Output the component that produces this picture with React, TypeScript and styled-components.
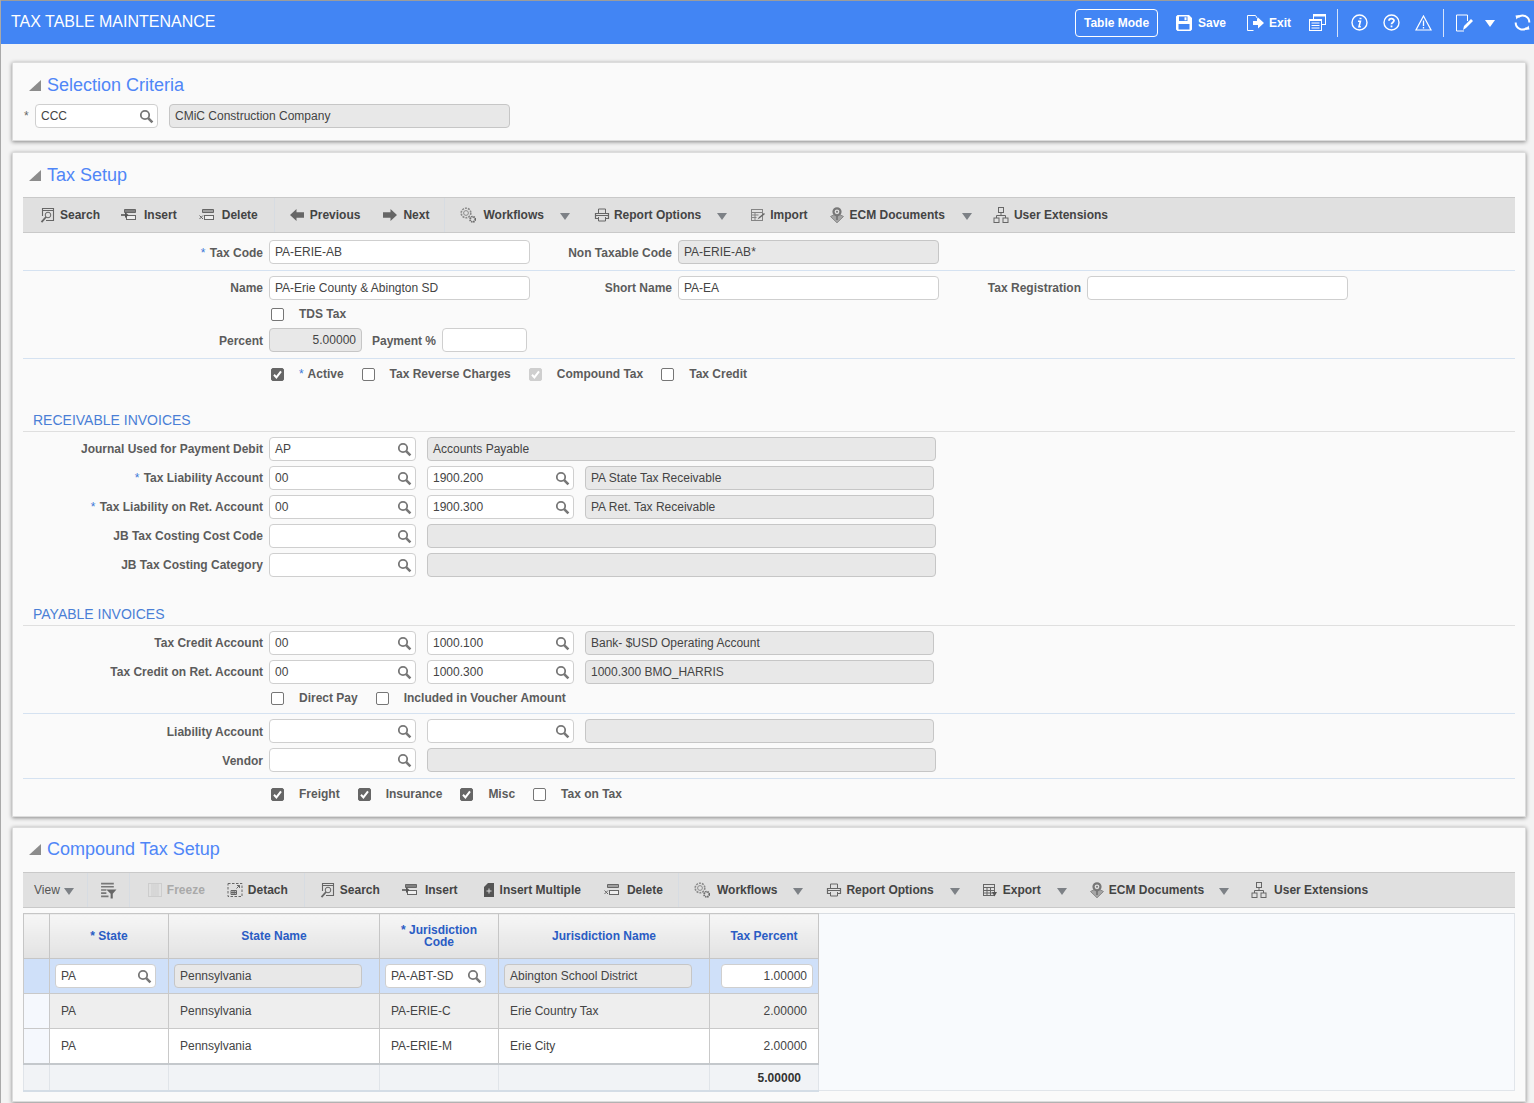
import React from 'react';
import styled, { createGlobalStyle } from 'styled-components';

const GlobalStyle = createGlobalStyle`
  html, body { margin: 0; padding: 0; background: #f3f3f3; }
  * { box-sizing: border-box; }
`;

const FONT = "'Liberation Sans', Arial, sans-serif";

// ---- page frame
const Page = styled.div`
  width: 1534px;
  height: 1103px;
  overflow: hidden;
  background: #f3f3f3;
  font-family: ${FONT};
  font-size: 12px;
  color: #444;
  border-left: 1px solid #a9a9a9;
`;

const TopBar = styled.header`
  height: 44px;
  margin-left: -1px;
  background: #4285f4;
  border-top: 1px solid #9c9c9c;
  display: flex;
  align-items: center;
  padding-left: 11px;
  color: #fff;
`;

const AppTitle = styled.div`
  flex: 1;
  font-size: 16px;
  margin-top: -1px;
`;

const ModeButton = styled.div`
  width: 83px;
  height: 28px;
  border: 1px solid #fff;
  border-radius: 4px;
  display: flex;
  align-items: center;
  justify-content: center;
  font-weight: 700;
  margin-right: 18px;
`;

const BarAction = styled.div<{ $w: number; $gap: number }>`
  width: ${p => p.$w}px;
  display: flex;
  align-items: center;
  gap: ${p => p.$gap}px;
  font-weight: 700;
`;

const BarDivider = styled.div<{ $mr: number }>`
  width: 1px;
  height: 28px;
  background: #d5e3fb;
  margin-right: ${p => p.$mr}px;
`;

const BarIcon = styled.div<{ $w: number }>`
  width: ${p => p.$w}px;
  display: flex;
  align-items: center;
`;

const Content = styled.main`
  padding: 18px 8px 0 11px;
  display: flex;
  flex-direction: column;
`;

const Panel = styled.section<{ $h: number; $mb: number }>`
  height: ${p => p.$h}px;
  margin-bottom: ${p => p.$mb}px;
  background: #fafafa;
  border: 1px solid #dcdcdc;
  box-shadow: 0 1px 4px rgba(0, 0, 0, 0.45);
  padding: 0 10px;
`;

const PanelHead = styled.div<{ $h?: number; $pt?: number }>`
  height: ${p => p.$h ?? 44}px;
  display: flex;
  align-items: flex-start;
  padding: ${p => p.$pt ?? 11}px 0 0 6px;
  gap: 6px;
  font-size: 18px;
  line-height: 22px;
  color: #4f86f7;
`;

const Wedge = styled.div`
  width: 0;
  height: 0;
  border-style: solid;
  border-width: 0 0 11px 12px;
  border-color: transparent transparent #8c8c8c transparent;
  margin-top: 6px;
`;

// ---- form parts
const Row = styled.div<{ $h?: number; $pt?: number; $pb?: number; $line?: boolean }>`
  display: flex;
  align-items: center;
  height: ${p => p.$h ?? 29}px;
  padding-top: ${p => p.$pt ?? 0}px;
  padding-bottom: ${p => p.$pb ?? 1}px;
  ${p => (p.$line ? 'border-bottom: 1px solid #d5e2f1;' : '')}
`;

const Label = styled.div<{ $w?: number; $low?: boolean }>`
  width: ${p => p.$w ?? 240}px;
  margin-right: 6px;
  padding-top: ${p => (p.$low ? 2 : 0)}px;
  text-align: right;
  font-weight: 700;
  color: #5c5c5c;
  flex: none;
  white-space: nowrap;
`;

const Req = styled.span`
  color: #3c78d8;
  font-weight: 400;
  margin-right: 1px;
`;

const CriteriaStar = styled.span`
  width: 11px;
  margin-left: 1px;
  color: #666;
`;

const Field = styled.div<{ $w: number; $ro?: boolean; $right?: boolean; $ml?: number }>`
  width: ${p => p.$w}px;
  height: 24px;
  flex: none;
  margin-left: ${p => p.$ml ?? 0}px;
  border: 1px solid ${p => (p.$ro ? '#c6c6c6' : '#cfcfcf')};
  border-radius: 4px;
  background: ${p => (p.$ro ? '#e8e8e8' : '#fff')};
  display: flex;
  align-items: center;
  justify-content: ${p => (p.$right ? 'flex-end' : 'space-between')};
  padding: 0 5px;
  color: #444;
  white-space: nowrap;
  overflow: hidden;
`;

const CheckRow = styled.div<{ $h?: number }>`
  height: ${p => p.$h ?? 29}px;
  display: flex;
  align-items: center;
  padding-left: 248px;
`;

const Box = styled.span<{ $on?: boolean; $off?: boolean }>`
  width: 13px;
  height: 13px;
  flex: none;
  border-radius: 2px;
  border: 1px solid ${p => (p.$off ? '#cfcfcf' : p.$on ? '#666' : '#767676')};
  background: ${p => (p.$off ? '#cfcfcf' : p.$on ? '#666' : '#fff')};
  display: flex;
  align-items: center;
  justify-content: center;
`;

const CheckText = styled.span`
  margin: 0 18px 0 15px;
  font-weight: 700;
  color: #5c5c5c;
  white-space: nowrap;
`;

const Section = styled.div<{ $mt: number }>`
  margin-top: ${p => p.$mt}px;
  height: 21px;
  padding-left: 10px;
  font-size: 14px;
  line-height: 18px;
  color: #4a7fd6;
  border-bottom: 1px solid #dfdfdf;
  margin-bottom: 3px;
`;

const Divider = styled.div<{ $mt?: number; $mb?: number }>`
  height: 1px;
  background: #d5e2f1;
  margin-top: ${p => p.$mt ?? 0}px;
  margin-bottom: ${p => p.$mb ?? 0}px;
`;

// ---- toolbars
const Toolbar = styled.div`
  height: 36px;
  background: #e0e0e0;
  border-top: 1px solid #c9c9c9;
  border-bottom: 1px solid #c9c9c9;
  display: flex;
  align-items: center;
  font-weight: 700;
  color: #444;
  white-space: nowrap;
`;

const ToolItem = styled.div<{ $ml: number; $off?: boolean; $gap?: number }>`
  margin-left: ${p => p.$ml}px;
  display: flex;
  align-items: center;
  gap: ${p => p.$gap ?? 6}px;
  color: ${p => (p.$off ? '#a9a9a9' : 'inherit')};
`;

const ViewMenu = styled(ToolItem)`
  font-weight: 400;
  color: #555;
`;

const ToolSep = styled.span<{ $ml: number }>`
  width: 1px;
  height: 34px;
  flex: none;
  background: #d7dce2;
  margin-left: ${p => p.$ml}px;
`;

const Caret = styled.span<{ $ml: number; $c?: string }>`
  margin-left: ${p => p.$ml}px;
  width: 0;
  height: 0;
  border-style: solid;
  border-width: 7px 5px 0 5px;
  border-color: ${p => p.$c ?? '#7d8186'} transparent transparent transparent;
  margin-top: 2px;
`;

// ---- table
const GridWrap = styled.div`
  height: 178px;
  margin-top: 5px;
  background: #f8fafd;
  border: 1px solid #e1e5ea;
  border-top-color: #d9dde2;
`;

const Grid = styled.table`
  border-collapse: collapse;
  table-layout: fixed;
  width: 795px;
  margin: -1px 0 0 -1px;
`;

const Th = styled.th`
  height: 45px;
  padding: 0 10px;
  border: 1px solid #c6c6c6;
  background: linear-gradient(#f6f6f6, #e2e2e2);
  color: #2a5cc4;
  font-size: 12px;
  font-weight: 700;
  line-height: 12px;
`;

const Td = styled.td<{ $bg: string; $right?: boolean }>`
  height: 35px;
  padding: 0 11px;
  border: 1px solid #c9c9c9;
  background: ${p => p.$bg};
  text-align: ${p => (p.$right ? 'right' : 'left')};
  color: #444;
`;

const FootCell = styled.td`
  height: 27px;
  padding: 2px 17px 0 0;
  border: 1px solid #e0e4e9;
  border-top: 2px solid #c4c8cc;
  border-bottom: 2px solid #d4dde6;
  background: #f1f3f6;
  text-align: right;
  font-weight: 700;
  color: #333;
`;

const SelCell = styled.td<{ $bg: string }>`
  border: 1px solid #c9c9c9;
  background: ${p => p.$bg};
`;

const EditCell = styled.td`
  height: 35px;
  padding: 0;
  background: #cfe0f9;
  border: 1px solid #c9c9c9;
`;

const CellInner = styled.div<{ $l: number }>`
  padding-left: ${p => p.$l}px;
  display: flex;
  align-items: center;
`;

// ---- icons
const Svg: React.FC<{ s?: number; c?: string; children: React.ReactNode }> = ({ s = 16, c = '#666', children }) => (
  <svg width={s} height={s} viewBox="0 0 16 16" fill="none" stroke={c} strokeWidth="1" style={{ flex: 'none' }}>
    {children}
  </svg>
);

const Mag: React.FC = () => (
  <svg width="15" height="15" viewBox="0 0 15 15" fill="none" stroke="#777" style={{ flex: 'none', marginRight: -2 }}>
    <circle cx="6" cy="6" r="4.2" strokeWidth="1.8" />
    <path d="M9.2 9.2 13.4 13.4" strokeWidth="2.6" />
  </svg>
);

const Tick: React.FC<{ c?: string }> = ({ c = '#fff' }) => (
  <svg width="11" height="11" viewBox="0 0 11 11" fill="none" stroke={c} strokeWidth="2">
    <path d="M2 5.8 4.4 8.4 9 2.4" />
  </svg>
);

const icons: Record<string, React.ReactNode> = {
  search: (
    <Svg>
      <path d="M2.500 9V1.500h11v12H6" strokeWidth="1.100" />
      <path d="M2.500 3.500h11" />
      <circle cx="8" cy="8" r="2.800" />
      <path d="M6 10 1.500 15.200" strokeWidth="1.800" />
    </Svg>
  ),
  insert: (
    <Svg>
      <path d="M3.500 2.500h11v3h-11z" fill="#808080" />
      <rect x="5.500" y="8.500" width="9" height="4" fill="#eee" />
      <path d="M0 8h4" strokeWidth="1.800" />
      <path d="M4 5v6l3.500-3z" fill="#555" stroke="none" />
    </Svg>
  ),
  del: (
    <Svg>
      <path d="M3.500 2.500h11v3h-11z" fill="#a0a0a0" />
      <rect x="5.500" y="8.500" width="9" height="4" fill="#eee" />
      <path d="M0.500 8.500l3.500 3.500M4 8.500.5 12" />
    </Svg>
  ),
  prev: (
    <Svg>
      <path d="M1 8l6.500-6v3.200H15v5.600H7.500V14z" fill="#666" stroke="none" />
    </Svg>
  ),
  next: (
    <Svg>
      <path d="M15 8 8.500 2v3.200H1v5.600h7.500V14z" fill="#666" stroke="none" />
    </Svg>
  ),
  workflows: (
    <Svg c="#8a8a8a">
      <circle cx="6" cy="6" r="4.800" strokeWidth="1.600" strokeDasharray="2 1" />
      <circle cx="6" cy="6" r="2.400" />
      <circle cx="12.700" cy="12.300" r="2.600" strokeWidth="1.800" strokeDasharray="1.400 .7" stroke="#666" />
    </Svg>
  ),
  report: (
    <Svg>
      <path d="M4.500 6V2h7v4" />
      <path d="M1.500 6.500h13v5h-13z" strokeWidth="1.200" />
      <path d="M1.500 8.500h13" />
      <path d="M4.500 10v4h7v-4" fill="#e0e0e0" />
    </Svg>
  ),
  import: (
    <Svg c="#858585">
      <rect x="1.500" y="2.500" width="11" height="11" />
      <path d="M1.500 5.500h11M1.500 8h7M1.500 10.500h5M5 5.500v8" />
      <path d="M7.500 12.500 9 10l5-4 1 1-5 4z" fill="#666" stroke="none" />
    </Svg>
  ),
  ecm: (
    <Svg c="#777">
      <path d="M1.500 9.500 5.500 7.500 8 10l2.500-2.500 4 2L8 15.800z" fill="#a5a5a5" stroke="#888" />
      <circle cx="8" cy="4.800" r="3.500" strokeWidth="2.200" />
      <circle cx="8" cy="4.800" r="1" fill="#777" stroke="none" />
      <path d="M8 8.500V13" strokeWidth="1.800" />
    </Svg>
  ),
  users: (
    <Svg>
      <rect x="5.500" y="0.500" width="5" height="5" />
      <rect x="1" y="11" width="5" height="4.500" />
      <rect x="10" y="11" width="5" height="4.500" />
      <path d="M8 5.500V8.500M3.500 11V8.500h9V11" />
    </Svg>
  ),
  filter: (
    <Svg s={17} c="#777">
      <path d="M1 1.500h12M1 4.500h12M1 7.500h5M1 10.500h5M1 13.500h7" strokeWidth="1.500" />
      <path d="M6 7h9.500l-3.500 4v4.500h-2V11z" fill="#666" stroke="none" />
    </Svg>
  ),
  freeze: (
    <Svg c="#cdcdcd">
      <rect x="1.500" y="1.500" width="13" height="13" />
      <path d="M5 2v12M7 2v12M9 2v12M11 2v12" />
    </Svg>
  ),
  detach: (
    <Svg>
      <rect x="1" y="1.500" width="14" height="13" strokeDasharray="2.500 1.500" />
      <path d="M4 8.500h5.500v4H4zM6 8.500v4M7.800 8.500v4M4 10.500h5.500" />
      <path d="M9.500 6.500l3-3M10 3.500h2.500V6" />
    </Svg>
  ),
  multi: (
    <Svg>
      <path d="M3 5 7 1h6v14H3z" fill="#555" stroke="none" />
      <path d="M8 6.500v5M5.500 9h5" stroke="#ddd" />
    </Svg>
  ),
  exportIcon: (
    <Svg>
      <rect x="1.500" y="2.500" width="11" height="11" />
      <path d="M1.500 5.500h11M1.500 8.500h11M1.500 11h11M5 5.500v8M8.500 5.500v8" />
      <path d="M10 10h5l-2.500 4.500z" fill="#555" stroke="none" />
    </Svg>
  ),
};

interface Tool {
  icon?: string;
  label?: string;
  ml: number;
  caret?: number;
  off?: boolean;
  gap?: number;
  sep?: number;
}

const setupTools: Tool[] = [
  { icon: 'search', label: 'Search', ml: 17, gap: 4 },
  { icon: 'insert', label: 'Insert', ml: 21, gap: 7 },
  { icon: 'del', label: 'Delete', ml: 22, gap: 7 },
  { sep: 16, ml: 0 },
  { icon: 'prev', label: 'Previous', ml: 14, gap: 5 },
  { icon: 'next', label: 'Next', ml: 22, gap: 5 },
  { sep: 15, ml: 0 },
  { icon: 'workflows', label: 'Workflows', ml: 15, gap: 7, caret: 16 },
  { icon: 'report', label: 'Report Options', ml: 24, gap: 4, caret: 16 },
  { icon: 'import', label: 'Import', ml: 23, gap: 4 },
  { icon: 'ecm', label: 'ECM Documents', ml: 21, gap: 5, caret: 17 },
  { icon: 'users', label: 'User Extensions', ml: 21, gap: 5 },
];

const compoundTools: Tool[] = [
  { sep: 13, ml: 0 },
  { icon: 'filter', ml: 12 },
  { sep: 12, ml: 0 },
  { icon: 'freeze', label: 'Freeze', ml: 17, gap: 4, off: true },
  { icon: 'detach', label: 'Detach', ml: 22, gap: 5 },
  { sep: 16, ml: 0 },
  { icon: 'search', label: 'Search', ml: 15, gap: 4 },
  { icon: 'insert', label: 'Insert', ml: 22, gap: 7 },
  { icon: 'multi', label: 'Insert Multiple', ml: 23, gap: 3 },
  { icon: 'del', label: 'Delete', ml: 23, gap: 7 },
  { sep: 15, ml: 0 },
  { icon: 'workflows', label: 'Workflows', ml: 15, gap: 7, caret: 16 },
  { icon: 'report', label: 'Report Options', ml: 23, gap: 4, caret: 16 },
  { icon: 'exportIcon', label: 'Export', ml: 22, gap: 5, caret: 16 },
  { icon: 'ecm', label: 'ECM Documents', ml: 22, gap: 4, caret: 15 },
  { icon: 'users', label: 'User Extensions', ml: 22, gap: 7 },
];

const ToolList: React.FC<{ tools: Tool[] }> = ({ tools }) => (
  <>
    {tools.map((t, i) =>
      t.sep !== undefined ? (
        <ToolSep key={i} $ml={t.sep} />
      ) : (
        <React.Fragment key={i}>
          <ToolItem $ml={t.ml} $off={t.off} $gap={t.gap}>
            {t.icon && icons[t.icon]}
            {t.label && <span>{t.label}</span>}
          </ToolItem>
          {t.caret && <Caret $ml={t.caret} />}
        </React.Fragment>
      ),
    )}
  </>
);

const Lookup: React.FC<{ w?: number; v?: string; ml?: number }> = ({ w = 147, v = '', ml }) => (
  <Field $w={w} $ml={ml}>
    <span>{v}</span>
    <Mag />
  </Field>
);

const Check: React.FC<{ on?: boolean; off?: boolean; children: React.ReactNode }> = ({ on, off, children }) => (
  <>
    <Box $on={on} $off={off}>
      {(on || off) && <Tick />}
    </Box>
    <CheckText>{children}</CheckText>
  </>
);

const App: React.FC = () => (
  <Page>
    <GlobalStyle />
    <TopBar>
      <AppTitle>TAX TABLE MAINTENANCE</AppTitle>
      <ModeButton>Table Mode</ModeButton>
      <BarAction $w={71} $gap={6}>
        <svg width="16" height="16" viewBox="0 0 16 16" fill="#fff">
          <path d="M0 1.500 1.500 0H13l3 3v11.500L14.500 16h-13L0 14.500zM3 1.500v4.500h8.500V1.500zM8.500 2.200h2v3h-2zM2.500 9v5.500h11V9z" fillRule="evenodd" />
        </svg>
        Save
      </BarAction>
      <BarAction $w={62} $gap={4}>
        <svg width="18" height="16" viewBox="0 0 18 16" fill="none" stroke="#fff" style={{ flex: 'none' }}>
          <path d="M6.500 15.500H.5V.5h8l2 3V6" />
          <path d="M6 6h5V2.500l6 5.500-6 5.500V10H6z" fill="#fff" stroke="none" />
        </svg>
        Exit
      </BarAction>
      <BarIcon $w={28}>
        <svg width="17" height="17" viewBox="0 0 17 17" fill="none" stroke="#fff">
          <rect x="4.500" y="0.500" width="12" height="10" fill="#4285f4" />
          <path d="M4.500 1.500h12" strokeWidth="2" />
          <rect x="0.500" y="5.500" width="12" height="11" fill="#4285f4" />
          <path d="M2.500 9h8M2.500 11.500h8M2.500 14h8M.5 6.500h12" />
        </svg>
      </BarIcon>
      <BarDivider $mr={13} />
      <BarIcon $w={32}>
        <svg width="17" height="17" viewBox="0 0 17 17" fill="none" stroke="#fff">
          <circle cx="8.500" cy="8.500" r="7.500" strokeWidth="1.400" />
          <path d="M9.500 3.800v1.400" strokeWidth="2" />
          <path d="M7 7.300h2.400L8 12.800h1.800" strokeWidth="1.600" />
        </svg>
      </BarIcon>
      <BarIcon $w={32}>
        <svg width="17" height="17" viewBox="0 0 17 17" fill="none" stroke="#fff">
          <circle cx="8.500" cy="8.500" r="7.500" strokeWidth="1.400" />
          <path d="M6 6.800C6 4 11 4 11 6.600c0 1.800-2.500 1.800-2.500 3.600" strokeWidth="1.800" />
          <path d="M8.500 11.500v1.800" strokeWidth="1.800" />
        </svg>
      </BarIcon>
      <BarIcon $w={28}>
        <svg width="17" height="16" viewBox="0 0 17 16" fill="none" stroke="#fff">
          <path d="M8.500 1 16 15H1z" strokeWidth="1.200" />
          <path d="M8.500 5.500v5.500M8.500 12v1.500" strokeWidth="1.300" />
        </svg>
      </BarIcon>
      <BarDivider $mr={12} />
      <BarIcon $w={29}>
        <svg width="17" height="18" viewBox="0 0 17 18" fill="none" stroke="#fff">
          <path d="M8 17H.5V1h11v6" />
          <path d="M7 16l1-4 7-7 2 2-7 7z" fill="#fff" stroke="none" />
        </svg>
      </BarIcon>
      <BarIcon $w={29}>
        <Caret $ml={0} $c="#fff" />
      </BarIcon>
      <BarIcon $w={20}>
        <svg width="17" height="17" viewBox="0 0 17 17" fill="none" stroke="#fff" strokeWidth="2">
          <path d="M4 3.200A6.800 6.800 0 0 1 15.300 8.500" />
          <path d="M13 13.800A6.800 6.800 0 0 1 1.700 8.500" />
          <path d="M1.500 1.500 6 1 2.500 5.500zM15.500 15.500 11 16l3.500-4.500z" fill="#fff" stroke="none" />
        </svg>
      </BarIcon>
    </TopBar>

    <Content>
      <Panel $h={79} $mb={11}>
        <PanelHead $h={41}>
          <Wedge />
          Selection Criteria
        </PanelHead>
        <Row $h={24} $pb={0}>
          <CriteriaStar>*</CriteriaStar>
          <Lookup w={123} v="CCC" />
          <Field $w={341} $ro $ml={11}>CMiC Construction Company</Field>
        </Row>
      </Panel>

      <Panel $h={665} $mb={10}>
        <PanelHead>
          <Wedge />
          Tax Setup
        </PanelHead>
        <Toolbar>
          <ToolList tools={setupTools} />
        </Toolbar>

        <Row $h={38} $pt={1} $pb={0} $line>
          <Label $low>
            <Req>*</Req> Tax Code
          </Label>
          <Field $w={261}>PA-ERIE-AB</Field>
          <Label $w={142} $low>Non Taxable Code</Label>
          <Field $w={261} $ro>PA-ERIE-AB*</Field>
        </Row>
        <Row $h={34} $pb={0}>
          <Label>Name</Label>
          <Field $w={261}>PA-Erie County &amp; Abington SD</Field>
          <Label $w={142}>Short Name</Label>
          <Field $w={261}>PA-EA</Field>
          <Label $w={142}>Tax Registration</Label>
          <Field $w={261} />
        </Row>
        <CheckRow $h={18}>
          <Check>TDS Tax</Check>
        </CheckRow>
        <Row $h={34} $pb={0}>
          <Label $low>Percent</Label>
          <Field $w={93} $ro $right>5.00000</Field>
          <Label $w={74} $low>Payment %</Label>
          <Field $w={85} />
        </Row>
        <Divider $mt={1} />
        <CheckRow $h={30}>
          <Check on>
            <Req>*</Req> Active
          </Check>
          <Check>Tax Reverse Charges</Check>
          <Check off>Compound Tax</Check>
          <Check>Tax Credit</Check>
        </CheckRow>

        <Section $mt={22}>RECEIVABLE INVOICES</Section>
        <Row>
          <Label>Journal Used for Payment Debit</Label>
          <Lookup v="AP" />
          <Field $w={509} $ro $ml={11}>Accounts Payable</Field>
        </Row>
        <Row>
          <Label>
            <Req>*</Req> Tax Liability Account
          </Label>
          <Lookup v="00" />
          <Lookup v="1900.200" ml={11} />
          <Field $w={349} $ro $ml={11}>PA State Tax Receivable</Field>
        </Row>
        <Row>
          <Label>
            <Req>*</Req> Tax Liability on Ret. Account
          </Label>
          <Lookup v="00" />
          <Lookup v="1900.300" ml={11} />
          <Field $w={349} $ro $ml={11}>PA Ret. Tax Receivable</Field>
        </Row>
        <Row>
          <Label>JB Tax Costing Cost Code</Label>
          <Lookup />
          <Field $w={509} $ro $ml={11} />
        </Row>
        <Row>
          <Label>JB Tax Costing Category</Label>
          <Lookup />
          <Field $w={509} $ro $ml={11} />
        </Row>

        <Section $mt={25}>PAYABLE INVOICES</Section>
        <Row>
          <Label>Tax Credit Account</Label>
          <Lookup v="00" />
          <Lookup v="1000.100" ml={11} />
          <Field $w={349} $ro $ml={11}>Bank- $USD Operating Account</Field>
        </Row>
        <Row>
          <Label>Tax Credit on Ret. Account</Label>
          <Lookup v="00" />
          <Lookup v="1000.300" ml={11} />
          <Field $w={349} $ro $ml={11}>1000.300 BMO_HARRIS</Field>
        </Row>
        <CheckRow $h={22}>
          <Check>Direct Pay</Check>
          <Check>Included in Voucher Amount</Check>
        </CheckRow>
        <Divider $mt={4} $mb={3} />
        <Row>
          <Label $low>Liability Account</Label>
          <Lookup />
          <Lookup ml={11} />
          <Field $w={349} $ro $ml={11} />
        </Row>
        <Row>
          <Label $low>Vendor</Label>
          <Lookup />
          <Field $w={509} $ro $ml={11} />
        </Row>
        <Divider $mt={3} />
        <CheckRow $h={30}>
          <Check on>Freight</Check>
          <Check on>Insurance</Check>
          <Check on>Misc</Check>
          <Check>Tax on Tax</Check>
        </CheckRow>
      </Panel>

      <Panel $h={275} $mb={0}>
        <PanelHead $pt={10}>
          <Wedge />
          Compound Tax Setup
        </PanelHead>
        <Toolbar>
          <ViewMenu $ml={11}>View</ViewMenu>
          <Caret $ml={4} />
          <ToolList tools={compoundTools} />
        </Toolbar>
        <GridWrap>
          <Grid>
            <colgroup>
              <col width="26" />
              <col width="119" />
              <col width="211" />
              <col width="119" />
              <col width="211" />
              <col width="109" />
            </colgroup>
            <thead>
              <tr>
                <Th />
                <Th>* State</Th>
                <Th>State Name</Th>
                <Th>* Jurisdiction Code</Th>
                <Th>Jurisdiction Name</Th>
                <Th>Tax Percent</Th>
              </tr>
            </thead>
            <tbody>
              <tr>
                <SelCell $bg="#cfe0f9" />
                <EditCell>
                  <CellInner $l={5}>
                    <Lookup w={101} v="PA" />
                  </CellInner>
                </EditCell>
                <EditCell>
                  <CellInner $l={5}>
                    <Field $w={188} $ro>Pennsylvania</Field>
                  </CellInner>
                </EditCell>
                <EditCell>
                  <CellInner $l={5}>
                    <Lookup w={101} v="PA-ABT-SD" />
                  </CellInner>
                </EditCell>
                <EditCell>
                  <CellInner $l={5}>
                    <Field $w={188} $ro>Abington School District</Field>
                  </CellInner>
                </EditCell>
                <EditCell>
                  <CellInner $l={11}>
                    <Field $w={92} $right>1.00000</Field>
                  </CellInner>
                </EditCell>
              </tr>
              <tr>
                <SelCell $bg="#f5f8fd" />
                <Td $bg="#eeeeee">PA</Td>
                <Td $bg="#eeeeee">Pennsylvania</Td>
                <Td $bg="#eeeeee">PA-ERIE-C</Td>
                <Td $bg="#eeeeee">Erie Country Tax</Td>
                <Td $bg="#eeeeee" $right>2.00000</Td>
              </tr>
              <tr>
                <SelCell $bg="#f5f8fd" />
                <Td $bg="#fff">PA</Td>
                <Td $bg="#fff">Pennsylvania</Td>
                <Td $bg="#fff">PA-ERIE-M</Td>
                <Td $bg="#fff">Erie City</Td>
                <Td $bg="#fff" $right>2.00000</Td>
              </tr>
              <tr>
                <FootCell />
                <FootCell />
                <FootCell />
                <FootCell />
                <FootCell />
                <FootCell>5.00000</FootCell>
              </tr>
            </tbody>
          </Grid>
        </GridWrap>
      </Panel>
    </Content>
  </Page>
);

export default App;
